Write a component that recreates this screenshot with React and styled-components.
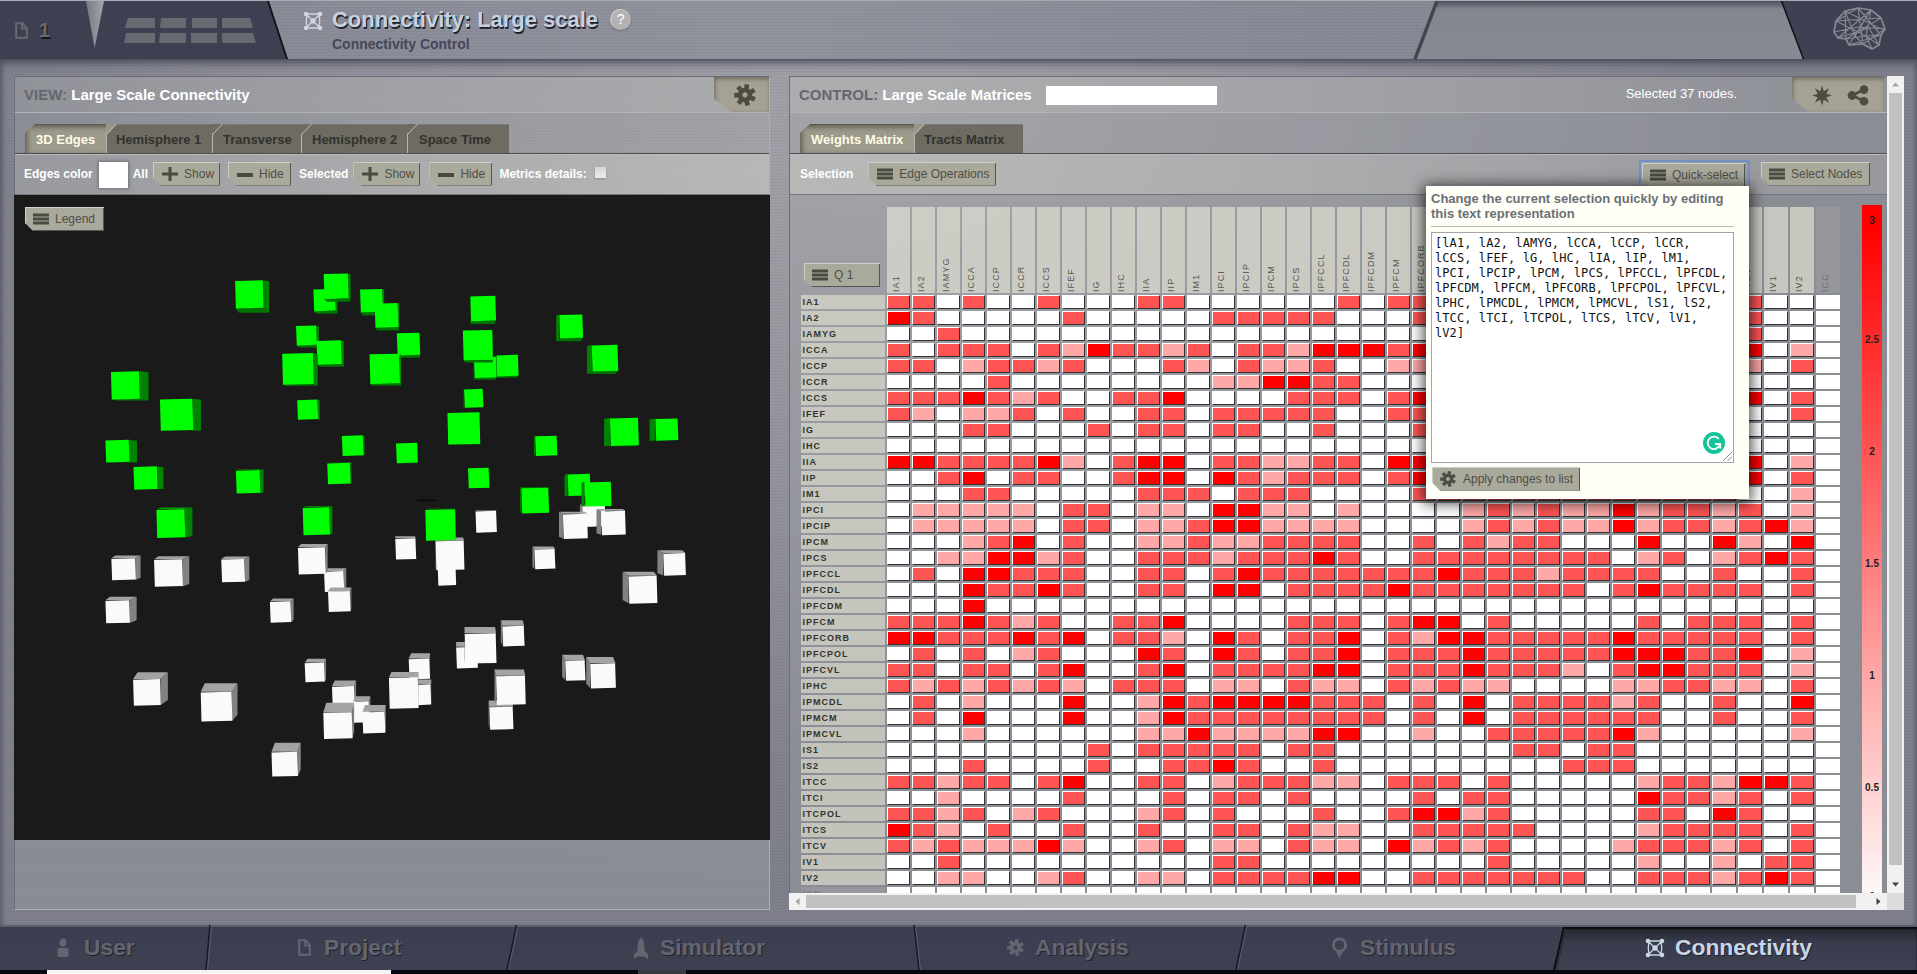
import React from "react";
import styled, { createGlobalStyle, css } from "styled-components";

/* ---------- data ---------- */

const REGIONS = [
  "IA1", "IA2", "IAMYG", "ICCA", "ICCP", "ICCR", "ICCS", "IFEF", "IG", "IHC", "IIA", "IIP", "IM1",
  "IPCI", "IPCIP", "IPCM", "IPCS", "IPFCCL", "IPFCDL", "IPFCDM", "IPFCM", "IPFCORB", "IPFCPOL",
  "IPFCVL", "IPHC", "IPMCDL", "IPMCM", "IPMCVL", "IS1", "IS2", "ITCC", "ITCI", "ITCPOL", "ITCS",
  "ITCV", "IV1", "IV2", "ICC",
];

const WEIGHTS = [
  "22020020002" + "20000002022" + "0000" + "00000000" + "200",
  "32000002000" + "00222220002" + "0000" + "00000000" + "200",
  "00200000000" + "00000000000" + "0000" + "00000000" + "200",
  "20222021322" + "12022133323" + "0000" + "00000000" + "301",
  "22012212000" + "21021120011" + "0000" + "00000000" + "102",
  "00002000000" + "00113322000" + "0000" + "00000000" + "000",
  "22232120022" + "30000222023" + "0000" + "00000000" + "302",
  "21011202002" + "20222220022" + "0000" + "00000000" + "002",
  "00022000202" + "20220020002" + "0000" + "00000000" + "000",
  "00000000000" + "00000000000" + "0000" + "00000000" + "000",
  "33222231023" + "30221122033" + "0000" + "00000000" + "301",
  "00230220023" + "30321222023" + "0000" + "00000000" + "302",
  "00022000002" + "22022200002" + "2222" + "22222222" + "001",
  "01111102201" + "10331101000" + "0121" + "21131221" + "201",
  "01111102201" + "12331111000" + "0121" + "21131221" + "231",
  "00012302001" + "12112222002" + "0212" + "20003003" + "103",
  "00113312002" + "22122232002" + "2222" + "22201201" + "232",
  "02033222002" + "20232222222" + "3222" + "12222002" + "002",
  "00032232002" + "20330222232" + "2222" + "22023222" + "202",
  "00030000000" + "00000000000" + "0000" + "00000000" + "000",
  "22232120022" + "30000222023" + "3020" + "00002022" + "202",
  "33222323022" + "10320223021" + "3322" + "22232222" + "202",
  "02020120003" + "20320223022" + "2322" + "22233322" + "301",
  "22022023002" + "30222233022" + "2322" + "21023322" + "201",
  "21212121022" + "20110211021" + "2110" + "00011221" + "102",
  "02010003001" + "32333322202" + "0302" + "22212002" + "003",
  "02030003001" + "32222222202" + "0302" + "22222002" + "002",
  "00010000001" + "13111133001" + "0022" + "22231000" + "001",
  "00000000202" + "22220220000" + "0002" + "20220000" + "000",
  "00020000200" + "22320020000" + "0000" + "02220000" + "000",
  "22122023002" + "20122211022" + "2020" + "00001221" + "332",
  "00100002000" + "20220200002" + "0220" + "00003221" + "202",
  "22120120001" + "20200020023" + "3120" + "00002203" + "200",
  "32102002002" + "00220211002" + "2222" + "00001222" + "202",
  "21211131001" + "20110211031" + "2120" + "00012221" + "202",
  "00200000000" + "00220000000" + "0020" + "00001001" + "022",
  "00110012001" + "10222233002" + "2222" + "22002221" + "232",
  "00000000000" + "00000000000" + "0000" + "00000000" + "000",
];

/* front face x0, y0, x1, y1 and the offset of the far face */
const GREEN_CUBES = [
  [367, 88, 438, 169, 15, 13], [565, 113, 620, 177, 6, 8], [591, 68, 653, 141, 6, 9],
  [683, 113, 740, 180, 4, 10], [720, 154, 779, 225, 3, 9], [521, 219, 573, 276, 6, 7],
  [573, 262, 636, 332, 6, 7], [776, 240, 834, 305, 1, 8], [486, 299, 565, 390, 11, 4],
  [707, 301, 783, 388, 4, 6], [962, 133, 1026, 206, -1, 9], [971, 310, 1028, 371, -1, 6],
  [943, 232, 1018, 319, 1, 8], [1028, 304, 1083, 366, -1, 5], [1187, 187, 1246, 256, -8, 9],
  [1269, 275, 1335, 352, -12, 8], [53, 352, 125, 433, 23, 4], [177, 432, 260, 524, 21, 1],
  [946, 403, 994, 457, -1, 2], [524, 434, 576, 492, 5, 1], [904, 471, 986, 564, 0, 1],
  [637, 538, 691, 597, 3, 0], [774, 560, 828, 618, 1, 1], [1126, 539, 1181, 597, -3, 0],
  [1315, 487, 1387, 568, -15, 2], [1430, 489, 1487, 553, -15, 1], [39, 551, 99, 616, 20, 1],
  [110, 628, 170, 695, 16, 0], [369, 639, 430, 706, 9, -2], [600, 618, 658, 679, 3, -1],
  [956, 632, 1009, 691, 1, 0], [1208, 650, 1265, 713, -8, 1], [1251, 673, 1318, 744, -8, 0],
  [1091, 690, 1160, 764, -3, -1], [168, 753, 240, 835, 19, -5], [538, 747, 606, 827, 7, -3],
  [848, 753, 924, 843, 1, -2],
];

const WHITE_CUBES = [
  [975, 757, 1028, 820, 0, -1], [1245, 742, 1303, 803, -6, -3], [1196, 766, 1258, 838, -10, -6],
  [1293, 757, 1354, 827, -12, -5], [772, 837, 824, 898, 0, -6], [879, 900, 925, 974, 0, 0],
  [874, 844, 946, 929, -1, -9], [54, 895, 115, 958, 13, -8], [162, 898, 234, 977, 17, -9],
  [332, 897, 391, 964, 12, -7], [592, 932, 642, 992, 6, -8], [526, 863, 595, 941, 6, -9],
  [602, 990, 658, 1050, 3, -10], [1124, 868, 1176, 926, -5, -7], [1450, 880, 1506, 945, -15, -8],
  [1362, 946, 1434, 1026, -15, -12], [39, 1017, 100, 1083, 18, -10], [455, 1020, 508, 1081, 7, -8],
  [926, 1152, 980, 1214, 0, -14], [948, 1113, 1027, 1200, -1, -18], [1043, 1091, 1098, 1150, -4, -16],
  [543, 1198, 593, 1254, 4, -11], [806, 1186, 859, 1246, 1, -15], [825, 1261, 862, 1321, 1, -14],
  [756, 1241, 830, 1331, 1, -16], [612, 1266, 669, 1330, 4, -16], [665, 1310, 706, 1372, 3, -14],
  [590, 1342, 663, 1419, 5, -27], [689, 1341, 746, 1403, 2, -20], [109, 1246, 178, 1322, 19, -20],
  [280, 1283, 359, 1368, 14, -25], [459, 1457, 525, 1528, 8, -26], [1010, 1326, 1070, 1392, -2, -18],
  [1027, 1236, 1101, 1320, -4, -18], [1202, 1191, 1252, 1250, -8, -16], [1265, 1200, 1329, 1272, -10, -18],
];

const SCALE_TICKS = [
  { label: "3", gap: 10 },
  { label: "2.5", gap: 107 },
  { label: "2", gap: 100 },
  { label: "1.5", gap: 100 },
  { label: "1", gap: 100 },
  { label: "0.5", gap: 100 },
  { label: "0", gap: 97 },
];

/* ---------- shared ---------- */

const Global = createGlobalStyle`
  html, body { margin: 0; padding: 0; }
  body { background: #05090f; overflow: hidden; font-family: "Liberation Sans", Arial, sans-serif; }
  *, *::before, *::after { box-sizing: border-box; }
`;

const stripes = "repeating-linear-gradient(180deg, rgba(20,22,40,0.045) 0 1px, transparent 1px 3px)";

const Page = styled.div`
  width: 1917px;
  height: 974px;
  display: flex;
  flex-direction: column;
`;

/* ---------- header ---------- */

const Header = styled.header`
  height: 59px;
  flex: none;
  display: flex;
  justify-content: space-between;
  border-top: 1px solid #a9adb6;
  background: ${stripes}, linear-gradient(90deg, #898b97 15%, #91939d 40%, #8a8c98 60%, #858691 90%);
  box-shadow: 0 1px 9px 2px rgba(52, 54, 72, 0.85);
  z-index: 1;
`;

const HeaderLeft = styled.div`
  display: flex;
`;

const Corner = styled.div`
  width: 288px;
  height: 58px;
  background: #11131c;
  clip-path: polygon(0 0, 269px 0, 288px 100%, 0 100%);
`;

const CornerFill = styled.div`
  width: 287px;
  height: 58px;
  display: flex;
  background: ${stripes}, linear-gradient(#404253, #3d4050);
  clip-path: polygon(0 0, 267px 0, 286px 100%, 0 100%);
`;

const ProjectMark = styled.div`
  display: flex;
  align-items: center;
  gap: 11px;
  width: 86px;
  padding: 0 0 0 15px;
  color: #676a71;
  font-size: 20px;
  font-weight: bold;
  text-shadow: 1px 2px 0 #14161d;
`;

const Notch = styled.div`
  width: 18px;
  height: 47px;
  background: linear-gradient(90deg, #777a83, #a3a5ad);
  clip-path: polygon(0 0, 100% 0, 48% 100%);
`;

const GridIcon = styled.svg`
  margin: 17px 0 0 20px;
`;

const TitleBlock = styled.div`
  display: grid;
  grid-template-columns: 20px auto 21px;
  column-gap: 9px;
  align-content: start;
  padding: 6px 0 0 15px;
`;

const TitleIcon = styled.span`
  display: flex;
  padding-top: 4px;
  color: #cdd6e2;
`;

const Title = styled.h1`
  margin: 0;
  font-size: 22px;
  line-height: 26px;
  height: 29px;
  letter-spacing: -0.02px;
  color: #c6d2e0;
  text-shadow: 1px 1px 0 #1d2029, 1px 2px 0 #2b2e39;
  white-space: nowrap;
`;

const Subtitle = styled.div`
  grid-column: 2 / 4;
  font-size: 14px;
  line-height: 16px;
  font-weight: bold;
  color: #454659;
`;

const Help = styled.span`
  width: 21px;
  height: 21px;
  margin: 2px 0 0 3px;
  border-radius: 50%;
  background: #b3b3b4;
  box-shadow: inset 1px 1px 0 #c9c9c9, 0 1px 2px #6c6e78;
  color: #fff;
  font-size: 14px;
  line-height: 21px;
  text-align: center;
`;

const HeaderRight = styled.svg`
  display: block;
`;

/* ---------- body ---------- */

const Body = styled.main`
  flex: 1;
  display: flex;
  gap: 19px;
  padding: 17px 13px 0 14px;
  background: ${stripes}, radial-gradient(ellipse 1100px 850px at 860px 60px, #a2a2a9 0%, #91929b 45%, #80818d 80%, #7f808c 100%);
  box-shadow: inset 5px 0 5px -3px #565866, inset -4px 0 4px -2px #5d5f6d;
`;

const Panel = styled.section`
  height: 834px;
  display: flex;
  flex-direction: column;
  border: 1px solid #6c6e77;
  background: rgba(170, 172, 172, 0.3);
`;

const ViewPanel = styled(Panel)`
  width: 756px;
  border-right-color: #b0b0b1;
  border-bottom-color: #b0b0b1;
`;

const ControlPanel = styled(Panel)`
  width: 1098px;
  height: 817px;
  border-right: 0;
  border-bottom: 0;
  overflow: hidden;
`;

const PanelTitle = styled.div`
  height: 36px;
  flex: none;
  display: flex;
  align-items: center;
  padding-left: 9px;
  border-bottom: 1px solid #b3b4b5;
  background: linear-gradient(90deg, rgba(188, 188, 184, ${(p) => (p.$fade ? 0.4 : 0.1)}), rgba(188, 188, 184, ${(p) => (p.$fade ? 0.08 : 0.35)}));
  font-size: 15px;
  font-weight: bold;
  color: #fff;
  white-space: pre;
`;

const Dim = styled.span`
  color: #63676d;
`;

const SearchBox = styled.div`
  width: 171px;
  height: 19px;
  margin-left: 14px;
  margin-top: 2px;
  background: #fff;
`;

const Status = styled.div`
  margin-left: auto;
  margin-bottom: 3px;
  font-size: 13px;
  font-weight: normal;
`;

const IconTab = styled.div`
  width: ${(p) => p.$w}px;
  height: 35px;
  margin-left: ${(p) => p.$ml};
  margin-right: ${(p) => p.$mr || 0}px;
  align-self: flex-start;
  display: flex;
  align-items: center;
  justify-content: flex-end;
  padding: 1px ${(p) => p.$pr}px 0 0;
  gap: 15px;
  color: #4e4b41;
  background: #a5a295;
  box-shadow: inset 1px 2px 4px rgba(60, 58, 48, 0.55);
  clip-path: polygon(0 0, 100% 0, 100% 100%, 17px 100%, 0 22px);
`;

const TabRow = styled.div`
  height: 41px;
  flex: none;
  display: flex;
  align-items: flex-end;
  padding-left: 10px;
  border-bottom: 1px solid #4b4c50;
`;

const Tab = styled.div`
  position: relative;
  width: ${(p) => p.$w}px;
  height: 29px;
  padding-left: ${(p) => p.$pl || 10}px;
  font-size: 13px;
  font-weight: bold;
  line-height: 29px;
  white-space: nowrap;
  border-top: 1px solid #5a5951;
  ${(p) =>
    p.$active
      ? css`
          width: ${p.$w + 9}px;
          margin-right: -9px;
          padding-left: 11px;
          color: #fffbe6;
          background: #9d9a8c;
          box-shadow: inset 2px 2px 5px rgba(50, 48, 38, 0.6);
          clip-path: polygon(10px 0, 100% 0, 100% 100%, 0 100%, 0 9px);
        `
      : css`
          color: #33322d;
          background: #6d6b62;
          border-top-color: #7a786f;
          border-left: 1px solid #b4b4ac;
        `}
`;

const TabNotch = styled.svg`
  position: absolute;
  left: -1px;
  top: -1px;
`;

const Toolbar = styled.div`
  height: 41px;
  flex: none;
  display: flex;
  align-items: center;
  padding: 0 0 2px ${(p) => p.$pad || 9}px;
  border-top: 1px solid #bcbcbc;
  border-bottom: 1px solid #74757b;
  background: linear-gradient(90deg, rgba(215, 215, 205, ${(p) => (p.$fade ? 0.42 : 0.15)}), rgba(215, 215, 205, ${(p) => (p.$fade ? 0.15 : 0.42)}));
  font-size: 12px;
  font-weight: bold;
  color: #fff;
  white-space: nowrap;
`;

const Swatch = styled.span`
  width: 29px;
  height: 26px;
  margin: 2px 5px 0 6px;
  background: #fff;
  box-shadow: 0 0 3px 1px #70717a;
  flex: none;
`;

const Check = styled.span`
  width: 11px;
  height: 11px;
  margin: -3px 0 0 8px;
  background: linear-gradient(#d6d6d8, #ededed);
  box-shadow: 0 1px 2px #8d8d90;
`;

const Button = styled.button`
  width: ${(p) => p.$w}px;
  height: 24px;
  margin: ${(p) => p.$m || "0"};
  padding: 0 0 0 ${(p) => p.$pl || 9}px;
  flex: none;
  display: flex;
  align-items: center;
  gap: ${(p) => p.$gap || 6}px;
  border: 0;
  background: #a9a99c;
  box-shadow: inset 1px 1px 0 #cfcfc8, inset -2px -2px 0 -1px #55554e;
  clip-path: polygon(0 0, 100% 0, 100% 100%, 8px 100%, 0 calc(100% - 8px));
  font: 12px "Liberation Sans", Arial, sans-serif;
  color: #4f4e47;
  text-align: left;
  white-space: nowrap;
`;

const Canvas = styled.div`
  height: 645px;
  margin: 0 -1px;
  padding: 12px 0 0 11px;
  background: #1a1a1a;
  display: flex;
`;

const Scene = styled.svg`
  display: block;
  margin: 43px 0 0 -14px;
`;

/* ---------- matrix ---------- */

const MatrixArea = styled.div`
  display: flex;
  align-items: flex-start;
  padding: 12px 0 0 11px;
`;

const COLS = "84px repeat(33, 23px) repeat(5, 24px)";

const Matrix = styled.div`
  display: grid;
  grid-template-columns: ${COLS};
  grid-template-rows: 86px;
  grid-auto-rows: 14px;
  gap: 2px;
`;

const CornerCell = styled.div`
  padding: 56px 0 0 3px;
`;

const ColHead = styled.div`
  writing-mode: vertical-rl;
  transform: rotate(180deg);
  display: flex;
  align-items: center;
  justify-content: flex-start;
  padding: 1px 0 0 6px;
  background: ${(p) => (p.$off ? "rgba(210,210,210,0.15)" : "rgba(224,224,210,0.7)")};
  color: ${(p) => (p.$off ? "#6f6f70" : "#55554f")};
  font-size: 9px;
  letter-spacing: 1.1px;
`;

const RowHead = styled.div`
  padding-left: 1.5px;
  background: ${(p) => (p.$off ? "rgba(210,210,210,0.15)" : "rgba(216,216,202,0.72)")};
  color: ${(p) => (p.$off ? "#77777a" : "#33332f")};
  font-size: 9px;
  font-weight: bold;
  line-height: 14px;
  letter-spacing: 1px;
`;

const LEVELS = ["#ffffff", "#ffa8a8", "#ff5454", "#ff0000"];

const Cell = styled.div`
  background: ${(p) => LEVELS[p.$level]};
  ${(p) =>
    !p.$off &&
    css`
      border: 1px solid #fff;
      border-right-color: #333;
      border-bottom-color: #333;
    `}
`;

const ScaleBar = styled.div`
  width: 20px;
  height: 700px;
  margin: -2px 0 0 22px;
  background: linear-gradient(#ff0000 0, #ff0000 3%, #fff4f4 97%, #fff);
  color: #222;
  font-size: 10px;
  font-weight: bold;
  text-align: center;
`;

const Tick = styled.div`
  height: 12px;
  line-height: 12px;
  margin-top: ${(p) => p.$gap}px;
`;

/* ---------- scroll bars ---------- */

const ScrollFrame = styled.div`
  width: 1115px;
  height: 834px;
  display: grid;
  grid-template-columns: 1098px 17px;
  grid-template-rows: 817px 17px;
  background: #dcdcdc;
`;

const BodyTone = styled.div`
  background: radial-gradient(ellipse 1100px 850px at 71px -16px, #a2a2a9 0%, #91929b 45%, #80818d 80%, #7f808c 100%);
`;

const VScroll = styled.div`
  display: flex;
  flex-direction: column;
  justify-content: space-between;
  align-items: center;
  background: #f1f1f1;
`;

const HScroll = styled.div`
  display: flex;
  align-items: center;
  background: #f1f1f1;
`;

const VThumb = styled.div`
  width: 13px;
  height: 772px;
  margin-bottom: 11px;
  background: #c1c1c1;
`;

const HThumb = styled.div`
  width: 1050px;
  height: 13px;
  margin-right: 14px;
  background: #c1c1c1;
`;

const Arrow = styled.svg`
  width: 17px;
  height: 17px;
  flex: none;
  fill: ${(p) => (p.$off ? "#a3a3a3" : "#404040")};
  transform: rotate(${(p) => p.$turn}deg);
`;

/* ---------- popup ---------- */

const QuickSelect = styled.div`
  position: relative;
  margin-left: auto;
  padding: 1px 3px 1px 1px;
  height: 28px;
  border: 2px solid rgba(106, 140, 207, 0.8);
`;

const Popup = styled.div`
  position: absolute;
  left: -215px;
  top: 24px;
  z-index: 5;
  width: 323px;
  height: 313px;
  padding: 5px 15px 0 5px;
  background: #fffff8;
  box-shadow: 0 2px 14px 2px rgba(0, 0, 0, 0.75);
`;

const PopupText = styled.div`
  height: 36px;
  border-bottom: 1px solid #bdbdb6;
  color: #6b6f75;
  font-size: 13px;
  line-height: 15px;
  white-space: pre;
`;

const TextBox = styled.div`
  position: relative;
  width: 303px;
  height: 231px;
  margin-top: 5px;
  padding: 3px 3px;
  border: 1px solid #a5a5a2;
  background: #fff;
  color: #111;
  font: 12px/15px "DejaVu Sans Mono", monospace;
  letter-spacing: 0.08px;
  white-space: pre;
`;

const Badge = styled.svg`
  position: absolute;
  right: 8px;
  bottom: 8px;
`;

const Resize = styled.svg`
  position: absolute;
  right: 1px;
  bottom: 1px;
`;

/* ---------- footer ---------- */

const Footer = styled.nav`
  height: 45px;
  flex: none;
  display: flex;
  border-top: 2px solid #5b5d6d;
  background: ${stripes}, linear-gradient(#3c3f51, #3e4152);
`;

const NavItem = styled.div`
  position: relative;
  width: ${(p) => p.$w}px;
  padding: 0 0 2px ${(p) => p.$pl}px;
  display: flex;
  align-items: center;
  gap: ${(p) => p.$gap || 12}px;
  font-size: 22.8px;
  font-weight: bold;
  color: ${(p) => (p.$active ? "#c9d6e4" : "#63666e")};
  text-shadow: 1px 1px 0 #20222c;
  ${(p) =>
    p.$active &&
    css`
      margin-left: -10px;
      background: linear-gradient(#23252e, #383b4b 35%, #3e4152);
      clip-path: polygon(10px 0, 100% 0, 100% 100%, 0 100%);
      box-shadow: inset 0 2px 2px #08090d;
    `}
`;

const Divider = styled.svg`
  position: absolute;
  right: -6px;
  top: -2px;
  z-index: 1;
`;

const ActiveEdge = styled.svg`
  position: absolute;
  left: 0;
  top: 0;
`;

const Taskbar = styled.div`
  height: 4px;
  flex: none;
  display: flex;
  background: #05090f;
`;

const TaskSlot = styled.div`
  width: ${(p) => p.$w}px;
  margin-left: ${(p) => p.$ml}px;
  background: ${(p) => p.$c};
`;

/* ---------- icons ---------- */

const GearIcon = ({ size = 20, teeth = 7 }) => (
  <svg width={size} height={size} viewBox="-10 -10 20 20">
    <circle r="4.500" fill="none" stroke="currentColor" strokeWidth="4.200" />
    {Array.from({ length: teeth }, (_, i) => (
      <polygon
        key={i}
        points="-1.900,-5 -2.400,-9.600 1.900,-9.900 2.100,-5"
        fill="currentColor"
        transform={`rotate(${12 + (i * 360) / teeth})`}
      />
    ))}
  </svg>
);

const BurstIcon = () => (
  <svg width="20" height="21" viewBox="-10 -10.5 20 21">
    <polygon
      fill="currentColor"
      points={Array.from({ length: 16 }, (_, i) => {
        const r = i % 2 ? 4.6 : 10.2;
        const a = (i * Math.PI) / 8;
        return `${(r * Math.sin(a)).toFixed(2)},${(-r * Math.cos(a)).toFixed(2)}`;
      }).join(" ")}
    />
  </svg>
);

const ShareIcon = () => (
  <svg width="22" height="21" viewBox="0 0 22 21">
    <path d="M17 4.5L5 10.5L17 16" stroke="currentColor" strokeWidth="2.6" fill="none" />
    <circle cx="5" cy="10.5" r="4.4" fill="currentColor" />
    <circle cx="17" cy="4.6" r="4.3" fill="currentColor" />
    <circle cx="17" cy="16.2" r="4.3" fill="currentColor" />
  </svg>
);

const MenuIcon = ({ w = 16 }) => (
  <svg width={w} height="12" viewBox="0 0 16 12" preserveAspectRatio="none">
    <path d="M0 0.5h16v3H0zM0 4.5h16v3H0zM0 8.5h16v3H0z" fill="#4b4a40" />
  </svg>
);

const PlusIcon = () => (
  <svg width="16" height="16" viewBox="0 0 16 16">
    <path d="M6.5 1h3v5.5H16v3H9.500v5.500h-3V9.500H0v-3h6.500z" fill="#4b4a40" />
  </svg>
);

const MinusIcon = () => (
  <svg width="16" height="16" viewBox="0 0 16 16">
    <path d="M0 7h16v4H0z" fill="#4b4a40" />
  </svg>
);

const DocIcon = ({ w = 13, h = 17 }) => (
  <svg width={w} height={h} viewBox="0 0 13 17">
    <path d="M1.200 1.200h6.300l4.300 5v9.600H1.200z" fill="none" stroke="currentColor" strokeWidth="2" />
    <path d="M7 1v5.600h5" fill="none" stroke="currentColor" strokeWidth="1.800" />
  </svg>
);

const NetIcon = ({ size = 20 }) => (
  <svg width={size} height={size} viewBox="0 0 20 20" stroke="currentColor" fill="currentColor">
    <path d="M3 3H17M3 17H17M4 3Q2.500 10 4 17M16 3Q17.500 10 16 17M3 3L17 17M17 3L3 17" fill="none" strokeWidth="1.300" />
    <circle cx="10" cy="10" r="2.700" stroke="none" />
    {[[3, 3], [17, 3], [3, 17], [17, 17]].map(([x, y]) => (
      <circle key={`${x}-${y}`} cx={x} cy={y} r="2.300" stroke="none" />
    ))}
  </svg>
);

const UserIcon = () => (
  <svg width="12" height="20" viewBox="0 0 12 20" fill="currentColor">
    <ellipse cx="6" cy="4.500" rx="3.500" ry="4" />
    <rect x="0.500" y="10" width="11" height="9" rx="1.500" />
  </svg>
);

const RocketIcon = () => (
  <svg width="14" height="22" viewBox="0 0 14 22" fill="currentColor">
    <path d="M7 0C9.500 3 10.300 6 10.300 9v4.500L14 17.500V22l-3.500-2.500h-7L0 22v-4.500l3.700-4V9C3.700 6 4.500 3 7 0z" />
  </svg>
);

const PinIcon = () => (
  <svg width="17" height="22" viewBox="0 0 17 22">
    <circle cx="8.500" cy="8" r="6.200" fill="none" stroke="currentColor" strokeWidth="2.800" />
    <path d="M4.500 13.500h8L8.500 21.500z" fill="currentColor" />
  </svg>
);

const BrainIcon = () => (
  <g fill="none" stroke="#858890" strokeWidth="1.200" strokeLinejoin="round">
    <path d="M1 25L3 14L12 4L25 1L38 3L48 11L52 22L48 28L46 38L39 42L30 37L16 38L13 32L5 31Z" strokeWidth="1.700" />
    <path d="M12 4L22 29L38 3L33 29L3 14L48 11L13 32L12 4L46 21L52 22L30 37L25 1L48 28L16 38L38 3L5 31L36 21L46 38L33 29L48 28M1 25L25 20L52 22M3 14L25 1M13 32L33 29M22 29L30 37L39 42L33 29" />
  </g>
);

const FlatTabNotch = () => (
  <TabNotch width="11" height="11" viewBox="0 0 11 11">
    <path d="M0 0H10.500L0 10.500z" fill="#9a978a" />
    <path d="M10.500 0L0.500 10.500" stroke="#c9c9c0" />
  </TabNotch>
);

const DarkTabNotch = () => (
  <TabNotch width="11" height="11" viewBox="0 0 11 11">
    <path d="M0 0V10L10 0z" fill="#6d6b62" />
    <path d="M10.500 0L0.500 10.500" stroke="#c0c0b8" />
  </TabNotch>
);

const Cube = ({ c, front, side, cap }) => {
  const [x0, y0, x1, y1, dx, dy] = c;
  const ex = dx > 0 ? x1 : x0;
  const ey = dy > 0 ? y1 : y0;
  const inset = Math.abs(dx) * 0.3;
  const fx0 = dx > 0 ? x0 + inset + 6 : x0 + dx;
  const fx1 = dx > 0 ? x1 + dx : x1 + dx * 0.4 - 2;
  const sy0 = dy < 0 ? y0 + dy : y0 + 3;
  const sy1 = dy > 0 ? y1 + dy : y1 + dy * 0.7 - 1;
  return (
    <g>
      <polygon fill={cap} points={`${x0},${ey} ${x1},${ey} ${fx1},${ey + dy} ${fx0},${ey + dy}`} />
      <polygon fill={side} points={`${ex},${y0} ${ex},${y1} ${ex + dx},${sy1} ${ex + dx},${sy0}`} />
      <polygon fill={front} points={`${x0},${y0 + 2} ${x1 - 1},${y0} ${x1 + 1},${y1 - 1} ${x0 + 2},${y1 + 1}`} />
    </g>
  );
};

const SELECTION = [
  "[lA1, lA2, lAMYG, lCCA, lCCP, lCCR,",
  "lCCS, lFEF, lG, lHC, lIA, lIP, lM1,",
  "lPCI, lPCIP, lPCM, lPCS, lPFCCL, lPFCDL,",
  "lPFCDM, lPFCM, lPFCORB, lPFCPOL, lPFCVL,",
  "lPHC, lPMCDL, lPMCM, lPMCVL, lS1, lS2,",
  "lTCC, lTCI, lTCPOL, lTCS, lTCV, lV1,",
  "lV2]",
].join("\n");

const NavLine = ({ from, to }) => (
  <Divider width="12" height="45" viewBox="0 0 12 45">
    <path d={`M${from} 0L${to} 45`} stroke="#171922" strokeWidth="1.500" />
    <path d={`M${from + 1.5} 0L${to + 1.5} 45`} stroke="#5a5d6c" />
  </Divider>
);

/* ---------- sections ---------- */

function TopBar() {
  return (
    <Header>
      <HeaderLeft>
        <Corner>
          <CornerFill>
            <ProjectMark><DocIcon w={13} h={17} />1</ProjectMark>
            <Notch />
            <GridIcon width="132" height="26" viewBox="0 0 132 26" fill="#666a71">
              <path d="M4 0H31V10H1zM37 0H62V10H36zM68 0H93V10H68zM98 0H126L129 10H98z" />
              <path d="M2 15H31V25H0zM36 15H62V25H35zM67 15H93V25H67zM98 15H129L132 25H98z" />
            </GridIcon>
          </CornerFill>
        </Corner>
        <TitleBlock>
          <TitleIcon><NetIcon size={20} /></TitleIcon>
          <Title>Connectivity: Large scale</Title>
          <Help>?</Help>
          <span />
          <Subtitle>Connectivity Control</Subtitle>
        </TitleBlock>
      </HeaderLeft>
      <HeaderRight width="505" height="58" viewBox="0 0 505 58">
        <defs>
          <linearGradient id="slot" x1="0" y1="0" x2="0" y2="1">
            <stop offset="0" stopColor="#4d4f5c" />
            <stop offset="0.14" stopColor="#83858f" />
            <stop offset="1" stopColor="#878994" />
          </linearGradient>
        </defs>
        <path d="M25 0H370L392 58H3z" fill="url(#slot)" />
        <path d="M25 0L3 58" stroke="#42444f" strokeWidth="3.500" />
        <path d="M370 0H505V58H392z" fill="#3e4152" />
        <path d="M369.500 0L391.500 58" stroke="#11131b" strokeWidth="1.600" />
        <g transform="translate(421 6)"><BrainIcon /></g>
      </HeaderRight>
    </Header>
  );
}

function EdgesView() {
  return (
    <ViewPanel>
      <PanelTitle>
        <Dim>VIEW:</Dim> Large Scale Connectivity
        <IconTab $w={55} $ml="auto" $pr={13}><GearIcon size={22} /></IconTab>
      </PanelTitle>
      <TabRow>
        <Tab $w={81} $active>3D Edges</Tab>
        <Tab $w={106} $pl={9}><FlatTabNotch />Hemisphere 1</Tab>
        <Tab $w={89}><DarkTabNotch />Transverse</Tab>
        <Tab $w={106}><DarkTabNotch />Hemisphere 2</Tab>
        <Tab $w={102} $pl={11}><DarkTabNotch />Space Time</Tab>
      </TabRow>
      <Toolbar>
        Edges color
        <Swatch />
        All
        <Button $w={67} $m="0 8px 0 5px"><PlusIcon />Show</Button>
        <Button $w={63} $m="0 8px 0 0"><MinusIcon />Hide</Button>
        Selected
        <Button $w={67} $m="0 9px 0 5px"><PlusIcon />Show</Button>
        <Button $w={63} $m="0 7px 0 0"><MinusIcon />Hide</Button>
        Metrics details:
        <Check />
      </Toolbar>
      <Canvas>
        <Button $w={79} $pl={8}><MenuIcon />Legend</Button>
        <Scene width="620" height="540" viewBox="0 0 1568 1568" preserveAspectRatio="none">
          {WHITE_CUBES.map((c, i) => <Cube key={i} c={c} front="#fafafa" side="#828282" cap="#a3a3a3" />)}
          {GREEN_CUBES.map((c, i) => <Cube key={i} c={c} front="#00ff00" side="#008300" cap={c[5] > 0 ? "#007400" : "#00a000"} />)}
          <path d="M820 728Q852 720 884 728Q852 732 820 728z" fill="#0c0c0c" />
        </Scene>
      </Canvas>
    </ViewPanel>
  );
}

function SelectionPopup() {
  return (
    <Popup>
      <PopupText>{"Change the current selection quickly by editing\nthis text representation"}</PopupText>
      <TextBox>
        {SELECTION}
        <Badge width="22" height="22" viewBox="0 0 22 22">
          <circle cx="11" cy="11" r="11" fill="#15c39a" />
          <path d="M15.800 7A6.200 6.200 0 1 0 16.500 13.500" fill="none" stroke="#fff" strokeWidth="1.800" />
          <path d="M12 12H17.200V16.500" fill="none" stroke="#fff" strokeWidth="1.800" />
        </Badge>
        <Resize width="9" height="9" viewBox="0 0 9 9">
          <path d="M0 9L9 0M4.500 9L9 4.500" stroke="#777" strokeWidth="0.900" />
        </Resize>
      </TextBox>
      <Button $w={148} $m="4px 0 0 1px" $pl={8} $gap={7}><GearIcon size={16} />Apply changes to list</Button>
    </Popup>
  );
}

function MatrixControl() {
  return (
    <ScrollFrame>
      <BodyTone>
        <ControlPanel>
          <PanelTitle $fade>
            <Dim>CONTROL:</Dim> Large Scale Matrices
            <SearchBox />
            <Status>Selected 37 nodes.</Status>
            <IconTab $w={92} $ml="55px" $mr={3} $pr={15}><BurstIcon /><ShareIcon /></IconTab>
          </PanelTitle>
          <TabRow>
            <Tab $w={114} $active>Weights Matrix</Tab>
            <Tab $w={109} $pl={9}><FlatTabNotch />Tracts Matrix</Tab>
          </TabRow>
          <Toolbar $pad={10} $fade>
            Selection
            <Button $w={128} $m="0 0 0 15px"><MenuIcon />Edge Operations</Button>
            <QuickSelect>
              <Button $w={103} $pl={8}><MenuIcon />Quick-select</Button>
              <SelectionPopup />
            </QuickSelect>
            <Button $w={109} $m="0 17px 0 11px" $pl={8}><MenuIcon />Select Nodes</Button>
          </Toolbar>
          <MatrixArea>
            <Matrix>
              <CornerCell><Button $w={76} $pl={8}><MenuIcon />Q 1</Button></CornerCell>
              {REGIONS.map((name, i) => <ColHead key={name} $off={i === 37}>{name}</ColHead>)}
              {REGIONS.map((name, r) => (
                <React.Fragment key={name}>
                  <RowHead $off={r === 37}>{name}</RowHead>
                  {(WEIGHTS[r] + "0").split("").map((v, c) => (
                    <Cell key={c} $level={Number(v)} $off={c === 37 || r === 37} />
                  ))}
                </React.Fragment>
              ))}
            </Matrix>
            <ScaleBar>
              {SCALE_TICKS.map((t) => <Tick key={t.label} $gap={t.gap}>{t.label}</Tick>)}
            </ScaleBar>
          </MatrixArea>
        </ControlPanel>
      </BodyTone>
      <VScroll>
        <Arrow $turn={0} $off viewBox="0 0 17 17"><path d="M5 10.500L8.500 6.500L12 10.500z" /></Arrow>
        <VThumb />
        <Arrow $turn={180} viewBox="0 0 17 17"><path d="M5 10.500L8.500 6.500L12 10.500z" /></Arrow>
      </VScroll>
      <HScroll>
        <Arrow $turn={-90} $off viewBox="0 0 17 17"><path d="M5 10.500L8.500 6.500L12 10.500z" /></Arrow>
        <HThumb />
        <Arrow $turn={90} viewBox="0 0 17 17"><path d="M5 10.500L8.500 6.500L12 10.500z" /></Arrow>
      </HScroll>
    </ScrollFrame>
  );
}

function BottomNav() {
  return (
    <Footer>
      <NavItem $w={208} $pl={57} $gap={15}><UserIcon />User<NavLine from={8} to={4} /></NavItem>
      <NavItem $w={304} $pl={90} $gap={13}><DocIcon w={13} h={17} />Project<NavLine from={10.5} to={1} /></NavItem>
      <NavItem $w={404} $pl={122} $gap={12}><RocketIcon />Simulator<NavLine from={4} to={9} /></NavItem>
      <NavItem $w={325} $pl={91} $gap={11}><GearIcon size={17} />Analysis<NavLine from={10.5} to={1} /></NavItem>
      <NavItem $w={322} $pl={90} $gap={12}><PinIcon />Stimulus</NavItem>
      <NavItem $w={364} $pl={92} $gap={10} $active>
        <ActiveEdge width="16" height="43" viewBox="0 0 16 43">
          <path d="M10.500 0L0.500 43" stroke="#0b0c11" strokeWidth="3" />
          <path d="M12.500 2L3 43" stroke="#2b2d39" strokeWidth="2" />
        </ActiveEdge>
        <NetIcon size={20} />
        Connectivity
      </NavItem>
    </Footer>
  );
}

export default function App() {
  return (
    <Page>
      <Global />
      <TopBar />
      <Body>
        <EdgesView />
        <MatrixControl />
      </Body>
      <BottomNav />
      <Taskbar>
        <TaskSlot $w={344} $ml={47} $c="#f4f4f4" />
        <TaskSlot $w={48} $ml={247} $c="#3a3c40" />
      </Taskbar>
    </Page>
  );
}
